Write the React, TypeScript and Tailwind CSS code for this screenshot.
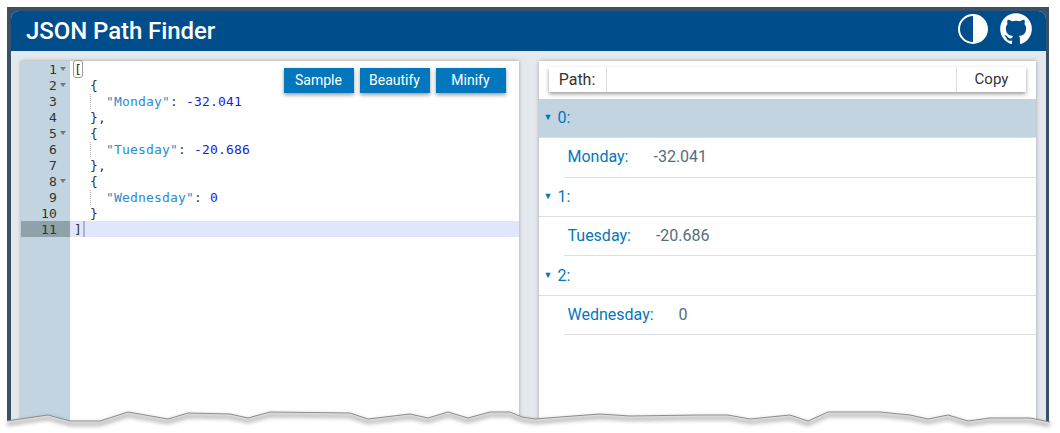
import React from 'react';

const codeLines = [
  { n: 1, fold: true },
  { n: 2, fold: true },
  { n: 3 },
  { n: 4 },
  { n: 5, fold: true },
  { n: 6 },
  { n: 7 },
  { n: 8, fold: true },
  { n: 9 },
  { n: 10 },
  { n: 11, active: true },
];

const tornEdge =
  '7,421 48,415 70,421 100,421 128,412 168,419 188,413 230,414 248,418 270,412 350,413 368,419 410,414 428,418 448,412 468,418 490,412 510,412 522,417 535,419 560,417 600,414 630,416 700,415 728,415 750,419 790,415 808,421 828,412 868,412 880,412 910,415 928,419 948,415 968,421 990,418 1030,418 1050,422';

const Entry = ({ k, v, h }: { k: string; v: string; h: string }) => (
  <div className={`ml-[25px] ${h} flex items-center pl-[4px] border-b border-[#dcdfe1] text-[16px]`}>
    <span className="text-[#0277bd] mr-[25px]">{k}:</span>
    <span className="text-[#546e7a]">{v}</span>
  </div>
);

const Key = ({ k, h, selected }: { k: string; h: string; selected?: boolean }) => (
  <div className={`${h} flex items-center border-b border-[#dcdfe1] text-[16px] text-[#0277bd] ${selected ? 'bg-[#c1d4e0]' : ''}`}>
    <span className="w-[19px] pl-[5px] text-[9px]">▼</span>
    <span>{k}:</span>
  </div>
);

const Guide = () => <span className="border-l border-dotted border-[#bbb] -mr-[1px]" />;

const App = () => {
  return (
    <div className="relative w-[1060px] h-[433px] overflow-hidden bg-white font-['Roboto',sans-serif]">
      <div className="ml-[7px] mt-[7px] w-[1042px] h-[426px] bg-[#3b4f66] pt-[4px] pl-[4px] pr-[3px]">
        <div className="h-full rounded-t-[8px] overflow-hidden bg-[#e4e9ed] flex flex-col">
          {/* Header */}
          <div className="h-[40px] shrink-0 bg-[#004d8c] flex items-center justify-between pl-[15px] pr-[11px]">
            <h1 className="text-[24px] font-medium text-white tracking-[-0.07px]">JSON Path Finder</h1>
            <div className="flex items-center gap-[8px] mb-[5px]">
              <svg className="mt-[1px]" width="32" height="32" viewBox="0 0 32 32">
                <circle cx="16" cy="16" r="14" fill="none" stroke="#fff" strokeWidth="2" />
                <path d="M16 2a14 14 0 0 1 0 28z" fill="#fff" />
              </svg>
              <svg width="38" height="38" viewBox="0 0 24 24" fill="#fff">
                <path d="M12,2A10,10 0 0,0 2,12C2,16.42 4.87,20.17 8.84,21.5C9.34,21.58 9.5,21.27 9.5,21C9.5,20.77 9.5,20.14 9.5,19.31C6.73,19.91 6.14,17.97 6.14,17.97C5.68,16.81 5.03,16.5 5.03,16.5C4.12,15.88 5.1,15.9 5.1,15.9C6.1,15.97 6.63,16.93 6.63,16.93C7.5,18.45 8.97,18 9.54,17.76C9.63,17.11 9.89,16.67 10.17,16.42C7.95,16.17 5.62,15.31 5.62,11.5C5.62,10.39 6,9.5 6.65,8.79C6.55,8.54 6.2,7.5 6.75,6.15C6.75,6.15 7.59,5.88 9.5,7.17C10.29,6.95 11.15,6.84 12,6.84C12.85,6.84 13.71,6.95 14.5,7.17C16.41,5.88 17.25,6.15 17.25,6.15C17.8,7.5 17.45,8.54 17.35,8.79C18,9.5 18.38,10.39 18.38,11.5C18.38,15.32 16.04,16.16 13.81,16.41C14.17,16.72 14.5,17.33 14.5,18.26C14.5,19.6 14.5,20.68 14.5,21C14.5,21.27 14.66,21.59 15.17,21.5C19.14,20.16 22,16.42 22,12A10,10 0 0,0 12,2Z" />
              </svg>
            </div>
          </div>

          {/* Panels */}
          <div className="flex-1 flex gap-[20px] pt-[10px] px-[10px]">
            {/* Editor */}
            <div className="relative w-[498px] bg-white flex shadow-[0_0_4px_rgba(0,0,0,0.3)]">
              <div className="w-[49px] shrink-0 bg-[#c1d4e0] font-['DejaVu_Sans_Mono',monospace] text-[13px] leading-[18px] text-[#333] tracking-[0.17px]">
                {codeLines.map(l => (
                  <div key={l.n} className={`relative h-[16px] pr-[13px] text-right ${l.active ? 'bg-[#8fa1a9]' : ''}`}>
                    {l.n}
                    {l.fold && <span className="absolute right-[4px] top-[6px] w-0 h-0 border-x-[3px] border-x-transparent border-t-[4px] border-t-[#777]" />}
                  </div>
                ))}
              </div>
              <div className="flex-1 font-['DejaVu_Sans_Mono',monospace] text-[13px] leading-[18px] text-[#333] whitespace-pre tracking-[0.17px]">
                <div className="h-[16px] pl-[4px]"><span className="inline-block w-[8px] h-[16px] outline outline-[#999] rounded-[2px] leading-[18px] align-top">[</span></div>
                <div className="h-[16px] pl-[4px]">  {'{'}</div>
                <div className="h-[16px] pl-[4px]">  <Guide />  <span className="text-[#2a8ccf]">"Monday"</span>: <span className="text-[#1c1cd8]">-32.041</span></div>
                <div className="h-[16px] pl-[4px]">  {'},'}</div>
                <div className="h-[16px] pl-[4px]">  {'{'}</div>
                <div className="h-[16px] pl-[4px]">  <Guide />  <span className="text-[#2a8ccf]">"Tuesday"</span>: <span className="text-[#1c1cd8]">-20.686</span></div>
                <div className="h-[16px] pl-[4px]">  {'},'}</div>
                <div className="h-[16px] pl-[4px]">  {'{'}</div>
                <div className="h-[16px] pl-[4px]">  <Guide />  <span className="text-[#2a8ccf]">"Wednesday"</span>: <span className="text-[#1c1cd8]">0</span></div>
                <div className="h-[16px] pl-[4px]">  {'}'}</div>
                <div className="h-[16px] pl-[4px] bg-[#e0e6fb]">]<span className="inline-block w-[2px] h-[16px] align-top ml-[1px] bg-[#a9b4d0]" /></div>
              </div>
              {/* Floating toolbar */}
              <div className="absolute top-[7px] right-[13px] flex gap-[6px]">
                {['Sample', 'Beautify', 'Minify'].map(b => (
                  <button key={b} className="w-[70px] h-[25px] bg-[#0277bd] text-white text-[14px] shadow-[0_2px_4px_rgba(0,0,0,0.4)]">{b}</button>
                ))}
              </div>
            </div>

            {/* Tree */}
            <div className="w-[498px] bg-white shadow-[0_0_4px_rgba(0,0,0,0.3)]">
              <div className="pt-[6px] px-[10px] pb-[7px]">
                <div className="h-[25px] flex items-stretch text-[#333] shadow-[0_2px_4px_rgba(0,0,0,0.4)]">
                  <div className="w-[58px] flex items-center justify-center border-r border-[#dcdfe1] text-[16px]">Path:</div>
                  <div className="flex-1" />
                  <div className="w-[70px] flex items-center justify-center border-l border-[#dcdfe1] text-[15px]">Copy</div>
                </div>
              </div>
              <Key k="0" h="h-[39px]" selected />
              <Entry k="Monday" v="-32.041" h="h-[40px] pb-[2px]" />
              <Key k="1" h="h-[39px]" />
              <Entry k="Tuesday" v="-20.686" h="h-[39px]" />
              <Key k="2" h="h-[40px]" />
              <Entry k="Wednesday" v="0" h="h-[39px]" />
            </div>
          </div>
        </div>
      </div>

      {/* Torn paper edge */}
      <svg className="absolute left-0 top-0" width="1060" height="433" viewBox="0 0 1060 433">
        <defs>
          <filter id="tornBlur" x="-5%" y="-200%" width="110%" height="500%">
            <feGaussianBlur stdDeviation="2" />
          </filter>
        </defs>
        <polygon points={`0,433 0,422 ${tornEdge} 1060,422 1060,433`} fill="#fff" />
        <polyline points={tornEdge} transform="translate(0 3)" fill="none" stroke="#777" strokeWidth="3" filter="url(#tornBlur)" opacity="0.7" />
        <polyline points={tornEdge} fill="none" stroke="#8c8c8c" strokeWidth="1" />
      </svg>
    </div>
  );
};

export default App;
